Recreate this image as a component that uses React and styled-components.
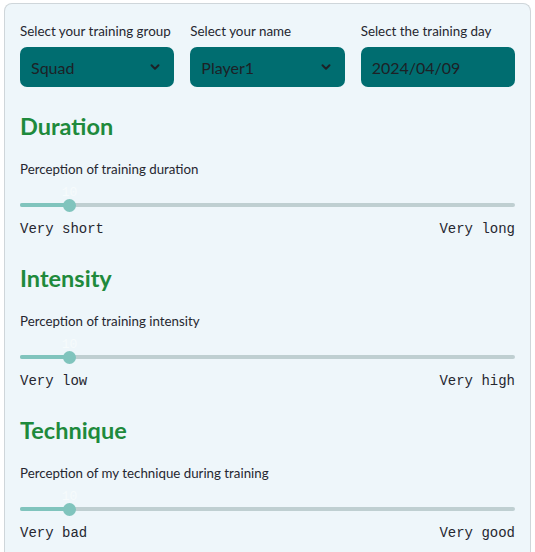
import React from 'react'
import styled, { createGlobalStyle } from 'styled-components'

const GlobalStyle = createGlobalStyle`
  body {
    margin: 0;
    background: #ffffff;
    font-family: Lato, "Liberation Sans", sans-serif;
    color: #31333f;
  }
`

const Card = styled.div`
  margin: 3px 4px 0 4px;
  width: 527px;
  box-sizing: border-box;
  border: 1px solid #cfd6da;
  border-bottom: none;
  border-radius: 8px 8px 0 0;
  background: #eef6fa;
  padding: 17px 15px 20px 15px;
  height: 560px;
`

const Pickers = styled.div`
  display: grid;
  grid-template-columns: repeat(3, 1fr);
  gap: 16px;
`

const Field = styled.div`
  display: flex;
  flex-direction: column;
`

const FieldLabel = styled.label`
  font-size: 13.4px;
  line-height: 20px;
  color: #262730;
  margin-bottom: 6px;
  white-space: nowrap;
`

const SelectBox = styled.div`
  height: 40px;
  border-radius: 7px;
  background: #006d70;
  display: flex;
  align-items: center;
  justify-content: space-between;
  padding: 0 12px 0 11px;
  font-size: 16px;
  color: #1d2126;
`

const Section = styled.section`
  margin-top: ${(p) => p.$top}px;
`

const Heading = styled.h3`
  margin: 0;
  font-size: 23.5px;
  line-height: 30px;
  font-weight: 700;
  color: #1e8a3c;
`

const Prompt = styled.div`
  margin-top: 18px;
  font-size: 13.3px;
  line-height: 20px;
  color: #262730;
`

const SliderWrap = styled.div`
  position: relative;
  margin-top: 18px;
  height: 16px;
  display: flex;
  align-items: center;
`

const Track = styled.div`
  position: relative;
  width: 100%;
  height: 4px;
  border-radius: 2px;
  background: #bfcfd1;
`

const Fill = styled.div`
  height: 100%;
  border-radius: 2px;
  background: #80c4bd;
`

const Thumb = styled.div`
  position: absolute;
  top: 50%;
  width: 13px;
  height: 13px;
  margin: -6.5px 0 0 -6.5px;
  border-radius: 50%;
  background: #80c4bd;
`

const ThumbValue = styled.span`
  position: absolute;
  bottom: 12px;
  left: 50%;
  transform: translateX(-50%);
  font-family: "Liberation Mono", monospace;
  font-size: 13px;
  color: #f6fbfc;
`

const Ends = styled.div`
  display: flex;
  justify-content: space-between;
  margin-top: 7px;
  font-family: "Liberation Mono", "DejaVu Sans Mono", monospace;
  font-size: 14px;
  line-height: 18px;
  color: #262730;
`

const Chevron = () => (
  <svg width="14" height="14" viewBox="0 0 24 24" fill="none" stroke="#1d2126" strokeWidth="3.4" strokeLinecap="round" strokeLinejoin="round">
    <path d="M6 9l6 6 6-6" />
  </svg>
)

const Slider = ({ value, min, max, low, high }) => {
  const pct = ((value - min) / (max - min)) * 100
  return (
    <>
      <SliderWrap>
        <Track>
          <Fill style={{ width: `${pct}%` }} />
          <Thumb style={{ left: `${pct}%` }}>
            <ThumbValue>{value}</ThumbValue>
          </Thumb>
        </Track>
      </SliderWrap>
      <Ends>
        <span>{low}</span>
        <span>{high}</span>
      </Ends>
    </>
  )
}

const sections = [
  { title: 'Duration', prompt: 'Perception of training duration', low: 'Very short', high: 'Very long', top: 24 },
  { title: 'Intensity', prompt: 'Perception of training intensity', low: 'Very low', high: 'Very high', top: 25 },
  { title: 'Technique', prompt: 'Perception of my technique during training', low: 'Very bad', high: 'Very good', top: 25 },
]

export default function App() {
  return (
    <>
      <GlobalStyle />
      <Card>
        <Pickers>
          <Field>
            <FieldLabel>Select your training group</FieldLabel>
            <SelectBox>
              Squad
              <Chevron />
            </SelectBox>
          </Field>
          <Field>
            <FieldLabel>Select your name</FieldLabel>
            <SelectBox>
              Player1
              <Chevron />
            </SelectBox>
          </Field>
          <Field>
            <FieldLabel>Select the training day</FieldLabel>
            <SelectBox>2024/04/09</SelectBox>
          </Field>
        </Pickers>
        {sections.map((s) => (
          <Section key={s.title} $top={s.top}>
            <Heading>{s.title}</Heading>
            <Prompt>{s.prompt}</Prompt>
            <Slider value={10} min={0} max={100} low={s.low} high={s.high} />
          </Section>
        ))}
      </Card>
    </>
  )
}
